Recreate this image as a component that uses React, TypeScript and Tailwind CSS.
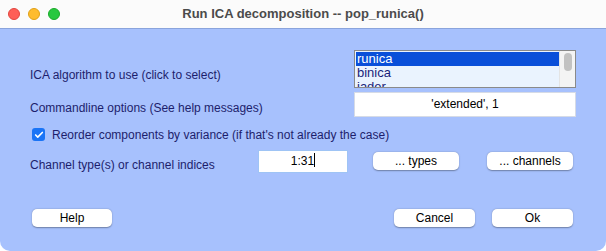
import { Check } from 'lucide-react'

function Btn({ label, w }: { label: string; w: string }) {
  return (
    <button
      className={`${w} h-[18px] bg-white rounded-[5px] shadow-[0_0.5px_1.5px_rgba(0,0,0,0.35)] text-[12px] leading-[18px] text-black text-center`}
    >
      {label}
    </button>
  )
}

export default function App() {
  return (
    <div className="w-[606px] h-[251px] bg-white flex flex-col font-['Liberation_Sans',Arial,sans-serif]">
      <div className="h-[29px] shrink-0 grid grid-cols-[1fr_auto_1fr] items-center border-b border-[#8aa4dc] bg-[#fbfbfb]">
        <div className="flex items-center gap-[8px] pl-[8px]">
          <span className="w-[12px] h-[12px] rounded-full bg-[#fe5f57] border border-[#e2463f]" />
          <span className="w-[12px] h-[12px] rounded-full bg-[#febc2e] border border-[#e1a116]" />
          <span className="w-[12px] h-[12px] rounded-full bg-[#28c840] border border-[#1aab29]" />
        </div>
        <div className="text-[13px] font-bold text-[#4b4b4b] pb-[1px]">Run ICA decomposition -- pop_runica()</div>
        <div />
      </div>

      <div className="flex-1 bg-[#a7c1fd] rounded-b-[10px] flex flex-col text-[#1d1e6c] text-[12px] leading-[14px]">
        {/* algorithm list */}
        <div className="mt-[21px] h-[38px] flex">
          <div className="pl-[30px] pt-[18px]">ICA algorithm to use (click to select)</div>
          <div className="ml-auto mr-[30px] w-[222px] h-[38px] border border-[#8a8a8a] bg-[#eaf3fe] flex overflow-hidden">
            <div className="flex-1 pt-[1px] pl-[1px] text-[13px] leading-[14px] text-[#1a1f7a]">
              <div className="bg-[#0a4fd9] text-white pl-[1px]">runica</div>
              <div className="pl-[1px]">binica</div>
              <div className="pl-[1px]">jader</div>
            </div>
            <div className="w-[16px] bg-[#f4f4f4] border-l border-[#e4e4e4] flex justify-center pt-[2px]">
              <div className="w-[8px] h-[18px] rounded-full bg-[#c2c2c2]" />
            </div>
          </div>
        </div>

        {/* command line */}
        <div className="mt-[4px] h-[25px] flex">
          <div className="pl-[30px] pt-[9px]">Commandline options (See help messages)</div>
          <div className="ml-auto mr-[30px] w-[222px] h-[25px] bg-white border border-[#d6dbe6] text-black text-center leading-[23px]">
            'extended', 1
          </div>
        </div>

        {/* checkbox */}
        <div className="mt-[11px] h-[13px] flex items-center pl-[32px] gap-[7px]">
          <span className="w-[13px] h-[13px] rounded-[3px] bg-[#1a74f6] flex items-center justify-center">
            <Check className="w-[10px] h-[10px] text-white" strokeWidth={4} />
          </span>
          <span>Reorder components by variance (if that's not already the case)</span>
        </div>

        {/* channels */}
        <div className="mt-[9px] h-[23px] flex items-start">
          <div className="w-[258px] pl-[30px] pt-[8px]">Channel type(s) or channel indices</div>
          <div className="w-[90px] h-[23px] bg-white border border-[#9fc4f5] text-black text-center leading-[21px]">
            1:31<span className="inline-block w-[1px] h-[14px] bg-black align-[-2px]" />
          </div>
          <div className="ml-[25px] mt-[2px]">
            <Btn label="... types" w="w-[86px]" />
          </div>
          <div className="ml-[28px] mt-[2px]">
            <Btn label="... channels" w="w-[86px]" />
          </div>
        </div>

        {/* bottom buttons */}
        <div className="mt-[36px] flex pl-[32px] pr-[33px]">
          <Btn label="Help" w="w-[80px]" />
          <div className="ml-auto flex gap-[17px]">
            <Btn label="Cancel" w="w-[81px]" />
            <Btn label="Ok" w="w-[81px]" />
          </div>
        </div>
      </div>
    </div>
  )
}
